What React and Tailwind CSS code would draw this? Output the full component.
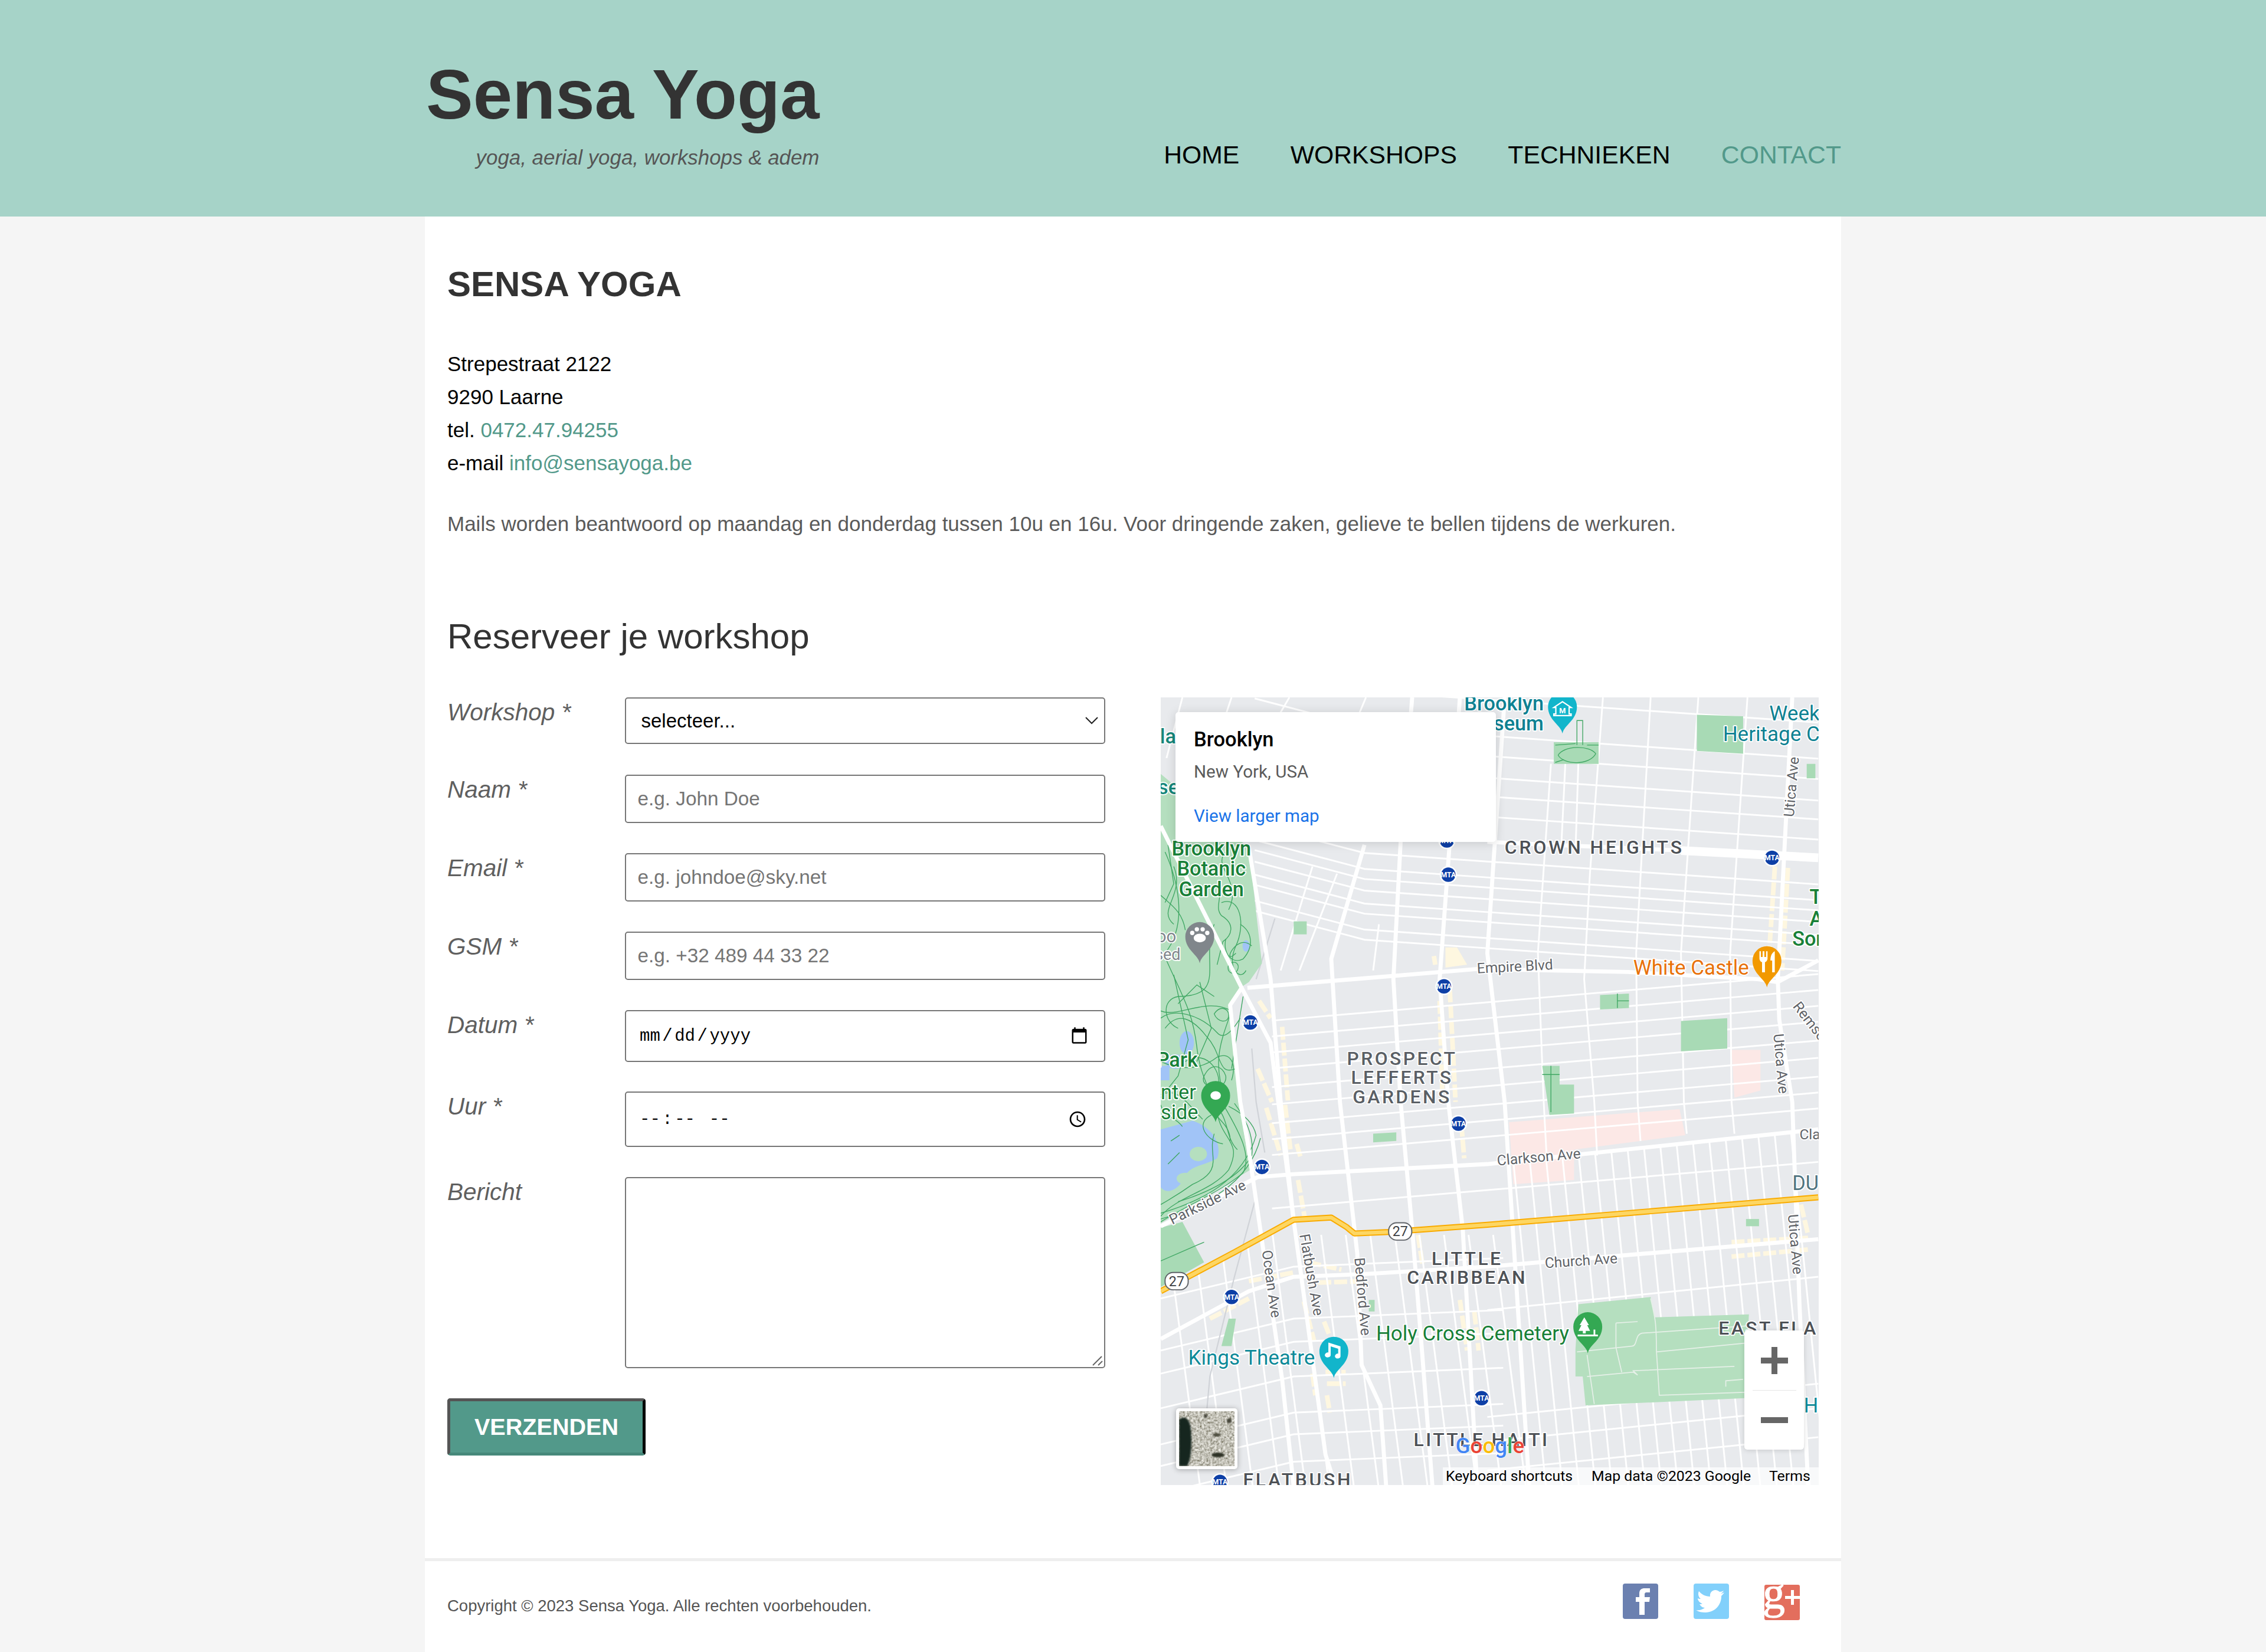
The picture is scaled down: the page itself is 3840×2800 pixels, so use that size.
import React from "react";

const pts = (list) => list.map((p) => p.join(",")).join(" ");

const upperYs = [491, 516, 530, 545, 558, 572, 603, 614, 621, 629, 638, 645, 656, 663];
const lowerYs = [694, 705, 716, 727, 740, 752, 765, 776, 787, 824];
const lowerLeftYs = [869, 905, 921, 945, 970, 985, 1004];
const farRightYs = [907, 981, 998, 1018];

const avenues = [
    [[803, 572], [859, 684], [879, 722], [895, 845], [917, 1007], [924, 1029]],
    [[859, 684], [851, 696], [858, 763], [863, 790], [887, 955], [895, 1029]],
    [[864, 587], [879, 678], [886, 763], [895, 845]],
    [[944, 585], [921, 664], [927, 763], [939, 868], [942, 945], [955, 973], [959, 1029]],
    [[977, 483], [969, 583], [964, 678], [969, 763], [977, 851], [984, 938], [991, 1029]],
    [[1010, 483], [1003, 583], [996, 678], [1002, 763], [1012, 851], [1022, 1029]],
    [[1041, 483], [1029, 660], [1041, 763], [1058, 1029]],
    [[1240, 483], [1230, 678], [1231, 706], [1240, 763], [1245, 903], [1251, 1029]],
];

const thinAves = [
    [[1073, 529], [1064, 660], [1068, 763], [1070, 800]],
    [[1109, 483], [1100, 605], [1096, 678], [1103, 763], [1105, 800]],
    [[1142, 483], [1132, 660], [1133, 763], [1135, 790]],
    [[1175, 483], [1163, 660], [1165, 763], [1167, 785]],
    [[1209, 483], [1197, 660], [1198, 763], [1200, 785]],
    [[1083, 528], [1080, 590]],
    [[1092, 528], [1090, 590]],
    [[954, 640], [950, 672]],
    [[908, 600], [886, 672]],
    [[925, 605], [899, 672]],
    [[818, 483], [807, 525]],
    [[852, 483], [848, 495]],
    [[892, 483], [885, 495]],
    [[945, 483], [940, 495]],
];

const eastWest = [
    [[803, 849], [870, 815], [895, 813], [1029, 806], [1258, 782]],
    [[863, 684], [1022, 671], [1126, 673], [1216, 678], [1230, 680], [1258, 665]],
    [[803, 927], [864, 894], [895, 884], [946, 882], [1029, 877], [1258, 858]],
    [[1163, 589], [1258, 594]],
    [[1029, 583], [1163, 589]],
];

const cream = [
    [[871, 693], [879, 705]],
    [[887, 711], [891, 762]],
    [[870, 740], [880, 763]],
    [[876, 767], [886, 800]],
    [[889, 765], [893, 798]],
    [[897, 792], [900, 802]],
    [[898, 817], [903, 845]],
    [[905, 874], [928, 879]],
    [[912, 888], [946, 887]],
    [[902, 901], [909, 928]],
    [[916, 915], [920, 925]],
    [[917, 950], [931, 950]],
    [[918, 958], [931, 958]],
    [[908, 951], [910, 966]],
    [[918, 966], [920, 978]],
    [[864, 887], [895, 881]],
    [[837, 913], [864, 899]],
    [[1003, 685], [1007, 763]],
    [[996, 693], [998, 762]],
    [[1011, 778], [1013, 802]],
    [[981, 855], [984, 875]],
    [[1010, 900], [1015, 935]],
    [[1020, 908], [1023, 935]],
    [[1228, 600], [1224, 660]],
    [[1237, 601], [1233, 672]],
    [[1246, 834], [1251, 855]],
    [[1198, 860], [1252, 857]],
    [[1198, 870], [1252, 865]],
    [[992, 662], [993, 668]],
];

const greens = [
    "1174,495 1206,496 1206,522 1174,520",
    "1075,514 1106,514 1106,529 1075,529",
    "1250,529 1256,529 1256,539 1250,539",
    "1163,707 1195,705 1195,726 1163,728",
    "1107,689 1127,688 1127,698 1107,699",
    "1067,738 1079,738 1079,751 1089,751 1089,771 1072,772",
    "895,638 904,638 904,647 895,647",
    "845,932 850,913 855,913 852,932",
    "947,900 951,900 951,908 947,908",
    "950,785 966,784 966,790 950,791",
    "1208,844 1217,844 1217,849 1208,849",
];

const parkPaths = [
    "M806 590 C815 610 822 640 806 660",
    "M845 625 C858 620 862 640 855 655 C848 670 858 680 862 672",
    "M840 640 C830 665 850 690 815 690 C803 692 805 708 815 712",
    "M807 665 C818 690 825 700 828 725 C830 745 838 755 842 770",
    "M803 700 C815 705 835 690 852 700 C845 720 838 735 848 762",
    "M806 712 C815 700 825 705 835 718 C846 730 842 745 855 740",
    "M820 735 C835 725 850 745 840 760 C830 770 852 775 851 790",
    "M855 660 C845 670 855 645 866 655",
    "M803 758 C815 752 822 765 832 775",
    "M842 770 C845 790 860 790 850 810 C838 825 815 828 803 842",
    "M847 766 C858 785 866 800 860 812 C845 825 820 835 803 846",
    "M840 785 C835 800 848 810 825 820 C818 825 810 830 803 834",
    "M812 640 C800 630 820 620 812 600",
    "M815 695 L828 682 L840 690",
    "M860 690 L852 740",
    "M808 585 L812 612 L806 625",
    "M848 590 C838 600 860 610 850 630",
    "M803 840 C830 832 860 818 869 786 C867 776 858 770 850 766",
    "M803 844 C832 836 864 820 872 788",
    "M854 764 C860 772 868 785 866 800 C858 815 835 826 815 832",
    "M843 768 C850 776 848 788 856 796 M838 772 C826 778 835 790 846 792",
    "M843 612 C846 622 840 628 845 634 C855 640 852 648 846 652 L842 668",
    "M858 640 C866 645 868 655 860 664 C852 668 846 660 848 650",
    "M803 705 C812 698 830 702 842 715 C848 722 856 708 858 705",
    "M812 675 L822 720 L815 745 L803 760",
    "M830 680 L838 712 L828 735",
    "M803 620 C812 628 818 632 820 644",
    "M803 735 C818 742 832 740 842 732 C850 728 856 735 852 748",
    "M833 745 C838 735 846 738 848 745 C849 752 840 756 836 752 C832 750 832 747 833 745Z",
    "M840 702 C844 696 850 698 850 703 C850 709 842 708 840 702Z",
    "M850 668 C855 664 858 668 856 672 C853 676 848 673 850 668Z",
    "M803 765 C806 775 812 772 818 780",
    "M810 790 L816 786 M808 806 L816 798",
];

const cemeteryPaths = [
    "M1142 899 C1145 912 1146 915 1146 935 L1148 966 L1207 964",
    "M1118 916 L1118 933 M1118 916 L1133 915 M1091 936 L1129 932 C1133 932 1131 924 1136 923 L1208 918",
    "M1146 936 L1207 930",
    "M1098 953 L1130 950 L1133 952 L1130 949 L1200 946",
    "M1118 933 L1122 950 M1206 955 L1194 956 L1194 960",
    "M1098 938 L1103 972",
];

const labels = [
    { t: "laz", x: 802.5, y: 515, c: "#16877a", s: 14, w: 500 },
    { t: "se", x: 801, y: 550, c: "#16877a", s: 14, w: 500 },
    { t: "Brooklyn", x: 838, y: 592.5, c: "#188038", s: 14, w: 500, a: "middle" },
    { t: "Botanic", x: 838, y: 606.5, c: "#188038", s: 14, w: 500, a: "middle" },
    { t: "Garden", x: 838, y: 620.5, c: "#188038", s: 14, w: 500, a: "middle" },
    { t: "oo", x: 800, y: 652.5, c: "#80868b", s: 12 },
    { t: "sed", x: 799, y: 664.5, c: "#80868b", s: 11 },
    { t: "Park", x: 800, y: 738.5, c: "#188038", s: 14, w: 500 },
    { t: "nter", x: 803, y: 761, c: "#188038", s: 14 },
    { t: "side", x: 803, y: 775, c: "#188038", s: 14 },
    { t: "Brooklyn", x: 1068, y: 492, c: "#0e8192", s: 14, w: 500, a: "end" },
    { t: "seum", x: 1068, y: 506, c: "#0e8192", s: 14, w: 500, a: "end" },
    { t: "Week", x: 1259, y: 499, c: "#0e8192", s: 14.3, a: "end" },
    { t: "Heritage C", x: 1192, y: 513, c: "#0e8192", s: 14.3 },
    { t: "T", x: 1252, y: 626, c: "#188038", s: 14, w: 500 },
    { t: "A", x: 1252, y: 641, c: "#188038", s: 14, w: 500 },
    { t: "Son", x: 1240, y: 655, c: "#188038", s: 14, w: 500 },
    { t: "CROWN HEIGHTS", x: 1041, y: 591, c: "#4d5156", s: 13, w: 500, ls: 1.6 },
    { t: "PROSPECT", x: 970, y: 737.5, c: "#5a5f65", s: 13, w: 500, ls: 1.4, a: "middle" },
    { t: "LEFFERTS", x: 970, y: 750.5, c: "#5a5f65", s: 13, w: 500, ls: 1.4, a: "middle" },
    { t: "GARDENS", x: 970, y: 764, c: "#5a5f65", s: 13, w: 500, ls: 1.4, a: "middle" },
    { t: "White Castle", x: 1130, y: 675, c: "#e8710a", s: 14.3 },
    { t: "Holy Cross Cemetery", x: 952, y: 928, c: "#188038", s: 14.3 },
    { t: "Kings Theatre", x: 822, y: 945, c: "#0e8a99", s: 14.3 },
    { t: "LITTLE", x: 1015, y: 876, c: "#4d5156", s: 13, w: 500, ls: 1.4, a: "middle" },
    { t: "CARIBBEAN", x: 1015, y: 889, c: "#4d5156", s: 13, w: 500, ls: 1.4, a: "middle" },
    { t: "LITTLE HAITI", x: 978, y: 1001, c: "#4d5156", s: 13, w: 500, ls: 1.4 },
    { t: "FLATBUSH", x: 860, y: 1029, c: "#4d5156", s: 13, w: 500, ls: 1.5 },
    { t: "EAST FLA", x: 1189, y: 924, c: "#4d5156", s: 13, w: 500, ls: 1.4 },
    { t: "DU", x: 1240, y: 824, c: "#50747f", s: 14 },
    { t: "Cla", x: 1245, y: 789, c: "#5f6368", s: 10 },
    { t: "Ho", x: 1248, y: 978, c: "#0e8a99", s: 14 },
    { t: "Empire Blvd", x: 1022, y: 674, c: "#5f6368", s: 10, r: -3 },
    { t: "Clarkson Ave", x: 1036, y: 807, c: "#5f6368", s: 10, r: -5 },
    { t: "Church Ave", x: 1069, y: 878, c: "#5f6368", s: 10, r: -4 },
    { t: "Parkside Ave", x: 811, y: 848, c: "#5f6368", s: 10, r: -26 },
    { t: "Ocean Ave", x: 873, y: 866, c: "#5f6368", s: 10, r: 82 },
    { t: "Flatbush Ave", x: 899, y: 855, c: "#5f6368", s: 10, r: 80 },
    { t: "Bedford Ave", x: 937, y: 871, c: "#5f6368", s: 10, r: 85 },
    { t: "Utica Ave", x: 1241, y: 566, c: "#5f6368", s: 10, r: -85 },
    { t: "Utica Ave", x: 1227, y: 716, c: "#5f6368", s: 10, r: 85 },
    { t: "Utica Ave", x: 1237, y: 841, c: "#5f6368", s: 10, r: 85 },
    { t: "Remse", x: 1240, y: 697, c: "#5f6368", s: 10, r: 52 },
];

const mtaStops = [
    [1001, 582], [1002, 605.7], [999, 683], [865, 708], [1226, 594],
    [1009, 778], [873, 808], [852, 898], [1025, 968], [844, 1026],
];

function Pin({ x, y, color, children }) {
    return (
        <g transform={`translate(${x} ${y})`}>
            <path
                d="M0 0 C-1 -6 -10 -9 -10 -18.5 A10 10 0 1 1 10 -18.5 C10 -9 1 -6 0 0Z"
                fill={color}
            />
            {children}
        </g>
    );
}

function Shield({ x, y }) {
    return (
        <g>
            <rect x={x - 8} y={y - 6} width="16" height="12" rx="5.5" fill="#fff" stroke="#5f6368" strokeWidth=".8" />
            <text x={x} y={y + 3.4} textAnchor="middle" fontSize="9.5" fill="#3c4043">27</text>
        </g>
    );
}

function MapDrawing() {
    return (
        <svg
            viewBox="803 483 455.3 545.1"
            className="block w-[1115px] h-[1335px]"
            fontFamily="Roboto, sans-serif"
        >
            <rect x="803" y="483" width="456" height="546" fill="#e8eaed" />

            {/* landuse under the roads */}
            <polygon points="1044,777 1162,768 1166,786 1089,796 1089,817 1047,820" fill="#fce8e6" />
            <polygon points="1198,727 1218,727 1218,755 1200,760" fill="#fce8e6" />
            <polygon points="1000,656 1008,656 1015,668 1000,670" fill="#fef7e0" />
            {cream.map((c, i) => (
                <polyline key={i} points={pts(c)} fill="none" stroke="#fef7e0" strokeWidth="3.2" strokeDasharray="9 2" />
            ))}

            {/* minor streets */}
            <g fill="none" stroke="#fff" strokeWidth="1.2">
                {upperYs.map((y) => (
                    <polyline key={y} points={pts([[868, y - 32.3], [944, y - 12.3], [1258, y + 9.4]])} />
                ))}
                {lowerYs.map((y) => (
                    <polyline key={y} points={pts([[880, y + 12.7], [1258, y - 19.5]])} />
                ))}
                {lowerLeftYs.map((y) => (
                    <polyline key={y} points={pts([[803, y + 30], [895, y + 8], [1040, y + 2]])} />
                ))}
                {farRightYs.map((y) => (
                    <polyline key={y} points={pts([[1029, y], [1258, y - 23]])} />
                ))}
                {thinAves.map((a, i) => (
                    <polyline key={i} points={pts(a)} />
                ))}
                {Array.from({ length: 18 }, (_, i) => {
                    const x = 1047 + 11.3 * i;
                    const top = 806 - 0.105 * (x - 1029);
                    return <line key={i} x1={x} y1={top} x2={x + 0.1 * (1029 - top)} y2="1029" />;
                })}
                {Array.from({ length: 14 }, (_, i) => {
                    const x = 812 + 17 * i;
                    const top = x < 895 ? 894 - (x - 803) * 0.55 : 855;
                    return <line key={i} x1={x} y1={top} x2={x + 0.13 * (1029 - top)} y2="1029" />;
                })}
            </g>

            {/* rail */}
            <g fill="none" stroke="#d0d3d8" strokeWidth=".9">
                <polyline points="868,832 854,884 837,953 835,975" />
                <polyline points="882,636 869,678" />
                <polyline points="866,726 869,763 875,798" />
            </g>

            {/* prospect park */}
            <polygon
                points="803,536 864,587 873,667 864,680 858,684 851,696 857,763 865,810 803,847"
                fill="#b5dfbf"
            />
            <polygon points="803,850 818,846 833,874 803,891" fill="#a8dab5" />
            <path
                d="M803 782 L825 776 C838 780 846 792 842 802 C832 808 822 806 818 818 C812 826 806 826 803 822Z"
                fill="#a1c4f7"
            />
            <ellipse cx="829" cy="799" rx="6" ry="5" fill="#b5dfbf" />
            <ellipse cx="820" cy="816" rx="6" ry="4" fill="#b5dfbf" />
            <ellipse cx="821" cy="722" rx="5" ry="8" fill="#a1c4f7" />
            <ellipse cx="813" cy="735" rx="7" ry="5" fill="#a1c4f7" />
            <rect x="803" y="738" width="6" height="10" fill="#a1c4f7" />
            <ellipse cx="862" cy="655" rx="2.4" ry="4" fill="#a1c4f7" />
            <g fill="none" stroke="#3fa763" strokeWidth=".55">
                {parkPaths.map((d, i) => (
                    <path key={i} d={d} />
                ))}
                <path d="M803 873 L833 860" />
            </g>

            {greens.map((p, i) => (
                <polygon key={i} points={p} fill="#a8dab5" />
            ))}
            <g fill="none" stroke="#3fa763" strokeWidth=".55">
                <path d="M1078 523 C1082 516 1100 516 1104 522 C1100 530 1082 530 1078 523Z" />
                <path d="M1091 516 L1091 499 L1095 499 L1095 516 M1076 516 L1090 515 M1076 528 L1082 526 M1098 516 L1106 516" />
                <path d="M1119 688 L1119 698 M1119 693 L1127 693" />
                <path d="M1073 738 L1073 770 M1067 744 L1079 744" />
            </g>
            <polygon
                points="1092,903 1142,898 1145,912 1210,910 1207,968 1097,973 1095,953 1090,953 1090,934"
                fill="#b5dfbf"
            />
            <g fill="none" stroke="#e6f0e8" strokeWidth=".7">
                {cemeteryPaths.map((d, i) => (
                    <path key={i} d={d} />
                ))}
            </g>

            {/* main roads */}
            <g fill="none" stroke="#fff" strokeWidth="2.8" strokeLinejoin="round">
                {avenues.map((a, i) => (
                    <polyline key={i} points={pts(a)} />
                ))}
                {eastWest.map((a, i) => (
                    <polyline key={i} points={pts(a)} strokeWidth={i === 3 ? 6 : 2.8} />
                ))}
            </g>
            {[
                { w: 4.2, c: "#f9ab00" },
                { w: 2.6, c: "#fdd663" },
            ].map((h) => (
                <polyline
                    key={h.c}
                    points={pts([[803, 894], [822, 884], [854, 867], [895, 844.5], [921, 843], [931.5, 849.5], [937, 854], [961, 853], [1029, 848], [1258, 829]])}
                    fill="none"
                    stroke={h.c}
                    strokeWidth={h.w}
                    strokeLinejoin="round"
                />
            ))}

            {/* labels */}
            <g stroke="#fff" strokeWidth="1.5" paintOrder="stroke" strokeLinejoin="round">
                {labels.map((l, i) => (
                    <text
                        key={i}
                        x={l.x}
                        y={l.y}
                        fill={l.c}
                        fontSize={l.s}
                        fontWeight={l.w || 400}
                        letterSpacing={l.ls || 0}
                        textAnchor={l.a || "start"}
                        transform={l.r ? `rotate(${l.r} ${l.x} ${l.y})` : undefined}
                    >
                        {l.t}
                    </text>
                ))}
            </g>

            {mtaStops.map(([x, y], i) => (
                <g key={i}>
                    <circle cx={x} cy={y} r="6" fill="#fff" />
                    <circle cx={x} cy={y} r="5" fill="#0d3fa6" />
                    <text x={x} y={y + 1.8} textAnchor="middle" fontSize="5" fontWeight="700" fill="#fff">MTA</text>
                </g>
            ))}
            <Shield x={814} y={887} />
            <Shield x={968.7} y={852.6} />

            {/* pins */}
            <Pin x={1081} y={508} color="#12b5cb">
                <path d="M-6 -18 L0 -22 L6 -18 L4.6 -18 L4.6 -13.5 L6 -13.5 L6 -12.4 L-6 -12.4 L-6 -13.5 L-4.6 -13.5 L-4.6 -18Z" fill="none" stroke="#fff" strokeWidth=".9" />
                <text x="0" y="-13.8" textAnchor="middle" fontSize="5.2" fontWeight="700" fill="#fff">M</text>
            </Pin>
            <Pin x={1222.5} y={683.7} color="#f29900">
                <path d="M-5.2 -25 V-20 C-5.2 -18.4 -4 -17.6 -3.4 -17.4 V-10.4 H-1.4 V-17.4 C-.8 -17.6 .4 -18.4 .4 -20 V-25 H-.6 V-21 H-1.8 V-25 H-3 V-21 H-4.2 V-25Z M5.4 -25 C3.4 -24 2.4 -21.8 2.4 -18.6 H3.6 V-10.4 H5.4Z" fill="#fff" />
            </Pin>
            <Pin x={830} y={667} color="#80868b">
                <ellipse cx="0" cy="-17.5" rx="4.2" ry="3" fill="#fff" />
                <circle cx="-5.2" cy="-21" r="1.5" fill="#fff" />
                <circle cx="-2" cy="-23.5" r="1.5" fill="#fff" />
                <circle cx="2" cy="-23.5" r="1.5" fill="#fff" />
                <circle cx="5.2" cy="-21" r="1.5" fill="#fff" />
            </Pin>
            <Pin x={841} y={777} color="#34a853">
                <ellipse cx="0" cy="-18.5" rx="3.6" ry="3" fill="#fff" />
            </Pin>
            <Pin x={1098.5} y={937} color="#34a853">
                <path d="M-2.4 -25 L-5.6 -19.5 H-4.4 L-6.4 -15.6 H-3.4 V-13.8 H-1.4 V-15.6 H1.6 L-.4 -19.5 H.8Z" fill="#fff" />
                <path d="M-7 -13 H7 V-11.8 H-7Z M4 -16.5 H5.2 V-13 H4Z" fill="#fff" />
            </Pin>
            <Pin x={922.8} y={954} color="#12b5cb">
                <path d="M-3.8 -24.5 L4.6 -21.8 V-15 C4.6 -13.2 1.4 -12.8 .8 -14.6 C.4 -16.2 2.4 -17.2 3 -16.8 V-20.2 L-2.2 -21.8 V-15.8 C-2.2 -14 -5.6 -13.6 -6.2 -15.4 C-6.6 -17 -4.4 -18 -3.8 -17.6Z" fill="#fff" />
            </Pin>

            {/* google wordmark */}
            <text x="1007" y="1006" fontSize="15" fontWeight="500" stroke="#fff" strokeWidth=".5" paintOrder="stroke">
                <tspan fill="#4285f4">G</tspan>
                <tspan fill="#ea4335">o</tspan>
                <tspan fill="#fbbc05">o</tspan>
                <tspan fill="#4285f4">g</tspan>
                <tspan fill="#34a853">l</tspan>
                <tspan fill="#ea4335">e</tspan>
            </text>
        </svg>
    );
}

function SatelliteThumb() {
    return (
        <svg viewBox="0 0 94 93" className="block w-full h-full" preserveAspectRatio="none">
            <filter id="aerial">
                <feTurbulence type="fractalNoise" baseFrequency="0.28" numOctaves="3" seed="4" />
                <feColorMatrix values="1.1 0 0 0 0  1.1 0 0 0 -.01  1.1 0 0 0 -.07  0 0 0 0 1" />
                <feGaussianBlur stdDeviation=".5" />
            </filter>
            <rect width="94" height="93" filter="url(#aerial)" />
            <path d="M0 14 C10 6 19 14 20 30 C22 50 22 78 14 93 H0Z" fill="#16261f" className="blur-[1.5px]" />
            <ellipse cx="66" cy="74" rx="11" ry="4" fill="#2e3226" className="blur-[1px]" />
            <ellipse cx="64" cy="40" rx="7" ry="3" fill="#4e4e40" className="blur-[1px]" />
            <ellipse cx="85" cy="16" rx="4" ry="4" fill="#45453a" className="blur-[1px]" />
            <ellipse cx="45" cy="8" rx="3" ry="3" fill="#45453a" className="blur-[1px]" />
        </svg>
    );
}

function SocialIcons() {
    return (
        <div className="flex items-start gap-[60px] pr-[70px] blur-[0.7px]">
            <svg viewBox="0 0 60 60" className="w-[60px] h-[60px]">
                <rect width="60" height="60" rx="4" fill="#6b80b0" />
                <path d="M28 53 V31 H22 V23 H28 V17 C28 10 32 8 37 8 H46 V15 H41 C37.5 15 37 16.5 37 19 V23 H46 L45 31 H37 V53Z" fill="#fff" />
            </svg>
            <svg viewBox="0 0 60 60" className="w-[60px] h-[60px]">
                <rect width="60" height="60" rx="4" fill="#82d0fb" />
                <path d="M52 15 C50 16 48 17 46 17 C48 16 50 14 51 12 C49 13 47 14 44 14 C42 12 39 11 37 11 C31 11 27 16 28 22 C20 22 13 18 9 13 C7 17 8 23 12 26 C10 26 9 26 7 25 C7 29 11 33 15 34 C13 35 12 35 10 35 C12 38 15 41 19 41 C15 44 10 46 4 45 C9 48 14 49 20 49 C37 49 47 35 47 22 L47 21 C49 19 51 17 52 15Z" fill="#fff" />
            </svg>
            <svg viewBox="0 0 60 60" className="w-[60px] h-[60px] mt-[2px]">
                <clipPath id="gplus">
                    <rect width="60" height="60" rx="3" />
                </clipPath>
                <g clipPath="url(#gplus)">
                    <rect width="60" height="60" fill="#e36e5d" />
                    <text x="-3" y="40" fontFamily="'Liberation Serif', serif" fontSize="76" fontWeight="400" fill="#fff" stroke="#fff" strokeWidth="1">g</text>
                    <path d="M45 9 H50 V19 H60 V24 H50 V34 H45 V24 H35 V19 H45Z" fill="#fff" />
                </g>
            </svg>
        </div>
    );
}

const inputClass =
    "block w-full border-2 border-[#767676] rounded-[5px] bg-white text-black";
const textInputClass =
    "h-[82px] px-[20px] text-[33.3px] font-['Liberation_Sans',Arial,sans-serif] placeholder:text-[#757575] placeholder:opacity-100";
const dateInputClass =
    "pl-[20px] font-['Liberation_Mono',monospace] text-[29px] [&::-webkit-datetime-edit-month-field]:px-[3.5px] [&::-webkit-datetime-edit-day-field]:px-[3.5px] [&::-webkit-datetime-edit-year-field]:px-[3.5px] [&::-webkit-datetime-edit-hour-field]:px-[3.5px] [&::-webkit-datetime-edit-minute-field]:px-[3.5px] [&::-webkit-datetime-edit-ampm-field]:ml-[8px] [&::-webkit-datetime-edit-ampm-field]:px-[3.5px] [&::-webkit-calendar-picker-indicator]:h-[32px] [&::-webkit-calendar-picker-indicator]:w-[32px]";

function Row({ label, mb, children }) {
    return (
        <div className={`flex ${mb}`}>
            <label className="w-[300.5px] shrink-0 pt-[1px] text-[40.5px] leading-[48px] italic text-[#5f5f5f]">
                {label}
            </label>
            <div className="flex-1">{children}</div>
        </div>
    );
}

export default function App() {
    const navItems = ["HOME", "WORKSHOPS", "TECHNIEKEN"];

    return (
        <div className="h-[2800px] overflow-hidden bg-[#f5f5f5] font-['Liberation_Sans',Arial,sans-serif]">
            {/* Header */}
            <header className="h-[367px] bg-[#a6d3c8]">
                <div className="mx-auto flex h-full w-[2400px] items-end justify-between">
                    <div className="inline-block self-start pl-[2px] pt-[100px] text-right">
                        <h1 className="text-[119.5px] font-bold leading-none text-[#333]">Sensa Yoga</h1>
                        <p className="mt-[30px] text-[34.9px] italic leading-none text-[#555]">
                            yoga, aerial yoga, workshops &amp; adem
                        </p>
                    </div>
                    <nav className="flex gap-[86.4px] pb-[83px] text-[42.7px] leading-none text-black">
                        {navItems.map((item) => (
                            <a key={item}>{item}</a>
                        ))}
                        <a className="text-[#52998a]">CONTACT</a>
                    </nav>
                </div>
            </header>

            {/* Main */}
            <main className="mx-auto h-[2433px] w-[2400px] bg-white">
                <div className="px-[38px] pt-[85px]">
                    <h2 className="text-[60px] font-bold leading-none text-[#333]">SENSA YOGA</h2>

                    <div className="mt-[77px] text-[35px] leading-[56px] text-black">
                        <p>Strepestraat 2122</p>
                        <p>9290 Laarne</p>
                        <p>
                            tel. <a className="text-[#52998a]">0472.47.94255</a>
                        </p>
                        <p>
                            e-mail <a className="text-[#52998a]">info@sensayoga.be</a>
                        </p>
                    </div>

                    <p className="mt-[47px] text-[35px] leading-[55.3px] text-[#5a5a5a]">
                        Mails worden beantwoord op maandag en donderdag tussen 10u en 16u. Voor dringende zaken, gelieve te bellen tijdens de werkuren.
                    </p>

                    <h3 className="mt-[134px] text-[60px] leading-none text-[#333]">Reserveer je workshop</h3>

                    <div className="mt-[73px] flex gap-[94px]">
                        {/* Form */}
                        <form className="w-[1115px]">
                            <Row label="Workshop *" mb="mb-[52px]">
                                <div className="relative">
                                    <select className={`${inputClass} h-[79px] appearance-none pl-[26px] text-[33px] font-['Liberation_Sans',Arial,sans-serif]`}>
                                        <option>selecteer...</option>
                                    </select>
                                    <svg viewBox="0 0 22 14" className="pointer-events-none absolute right-[12px] top-[32px] h-[14px] w-[22px]">
                                        <path d="M1 2 L11 12 L21 2" fill="none" stroke="#222" strokeWidth="2" />
                                    </svg>
                                </div>
                            </Row>
                            <Row label="Naam *" mb="mb-[51px]">
                                <input className={`${inputClass} ${textInputClass}`} placeholder="e.g. John Doe" />
                            </Row>
                            <Row label="Email *" mb="mb-[51px]">
                                <input className={`${inputClass} ${textInputClass}`} placeholder="e.g. johndoe@sky.net" />
                            </Row>
                            <Row label="GSM *" mb="mb-[51px]">
                                <input className={`${inputClass} ${textInputClass}`} placeholder="e.g. +32 489 44 33 22" />
                            </Row>
                            <Row label="Datum *" mb="mb-[50px]">
                                <input type="date" className={`${inputClass} ${dateInputClass} h-[88px] pr-[24px]`} />
                            </Row>
                            <Row label="Uur *" mb="mb-[51px]">
                                <input type="time" className={`${inputClass} ${dateInputClass} h-[94px] pr-[26px]`} />
                            </Row>
                            <Row label="Bericht" mb="mb-[51px]">
                                <div className="relative">
                                    <textarea className={`${inputClass} h-[324px] resize-none`} />
                                    <svg viewBox="0 0 20 20" className="pointer-events-none absolute bottom-[3px] right-[3px] h-[20px] w-[20px]">
                                        <path d="M2 18 L17 3 M11 18 L18 11" fill="none" stroke="#666" strokeWidth="2" />
                                    </svg>
                                </div>
                            </Row>
                            <button
                                type="button"
                                className="block h-[97px] w-[336px] rounded-[5px] border-[5px] border-t-[#555] border-l-[#555] border-r-black border-b-[#46887a] bg-[#52998a] text-[39.6px] font-bold text-white"
                            >
                                VERZENDEN
                            </button>
                        </form>

                        {/* Map */}
                        <div className="relative h-[1335px] w-[1115px] overflow-hidden">
                            <MapDrawing />

                            <div className="absolute left-[25px] top-[25px] h-[220px] w-[543px] rounded-[5px] bg-white pl-[31px] pt-[24px] font-['Roboto',sans-serif] shadow-[0_2px_17px_rgba(0,0,0,0.15)]">
                                <p className="text-[34.5px] font-medium leading-[44px] text-black">Brooklyn</p>
                                <p className="mt-[11px] text-[29.6px] leading-[44px] text-[#5b5b5b]">New York, USA</p>
                                <p className="mt-[31px] text-[29.6px] leading-[44px] text-[#1a73e8]">View larger map</p>
                            </div>

                            <div className="absolute left-[26px] top-[1205px] h-[103px] w-[104px] rounded-[5px] bg-white p-[5px] shadow-[0_1px_10px_rgba(0,0,0,0.3)]">
                                <SatelliteThumb />
                            </div>

                            <div className="absolute left-[989px] top-[1073px] flex h-[202px] w-[101px] flex-col items-center rounded-[5px] bg-white shadow-[0_1px_8px_rgba(0,0,0,0.15)]">
                                <div className="flex h-[101px] w-full items-center justify-center">
                                    <svg viewBox="0 0 46 46" className="h-[46px] w-[46px]">
                                        <path d="M18 0 H28 V18 H46 V28 H28 V46 H18 V28 H0 V18 H18Z" fill="#666" />
                                    </svg>
                                </div>
                                <div className="h-[1px] w-[74px] bg-[#e6e6e6]" />
                                <div className="flex h-[100px] w-full items-center justify-center">
                                    <div className="h-[10px] w-[46px] bg-[#666]" />
                                </div>
                            </div>

                            <div className="absolute bottom-0 right-0 flex h-[30px] w-[637px] items-center bg-white/70 pl-[5px] font-['Roboto',sans-serif] text-[24.8px] leading-none text-black">
                                <span className="w-[247px]">Keyboard shortcuts</span>
                                <span className="w-[301px]">Map data ©2023 Google</span>
                                <span>Terms</span>
                            </div>
                        </div>
                    </div>
                </div>

                {/* Footer */}
                <footer className="mt-[124px] flex items-center justify-between border-t-[5px] border-[#eee] pl-[38px] pt-[38px]">
                    <p className="mt-[12px] text-[27.5px] leading-none text-[#555]">
                        Copyright © 2023 Sensa Yoga. Alle rechten voorbehouden.
                    </p>
                    <SocialIcons />
                </footer>
            </main>
        </div>
    );
}
